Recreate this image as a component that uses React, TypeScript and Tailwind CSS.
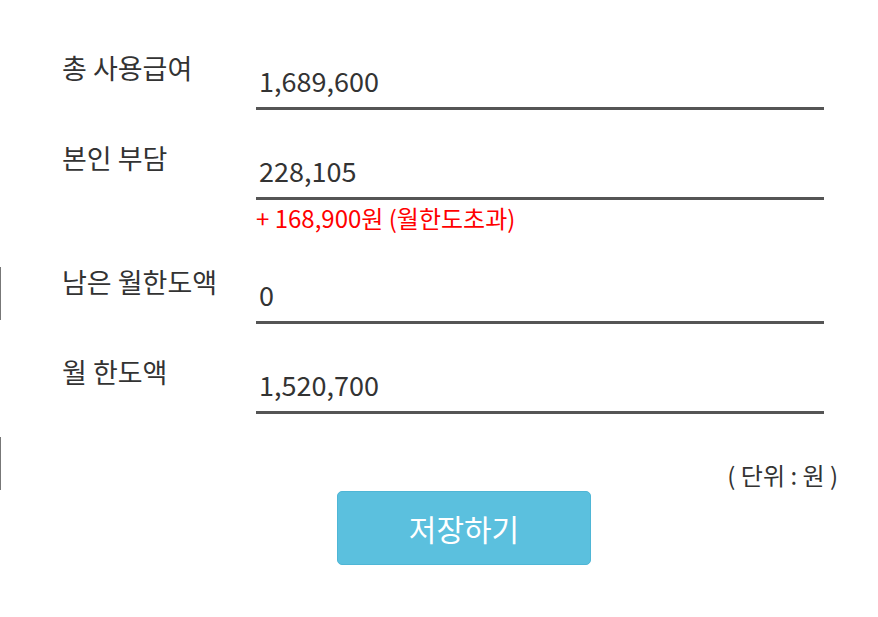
import React from 'react';

type Row = { label: string; value: string; note?: string };

const rows: Row[] = [
  { label: '총 사용급여', value: '1,689,600' },
  { label: '본인 부담', value: '228,105', note: '+ 168,900원 (월한도초과)' },
  { label: '남은 월한도액', value: '0' },
  { label: '월 한도액', value: '1,520,700' },
];

const App: React.FC = () => {
  return (
    <div
      className="relative min-h-[617px] w-[878px] bg-white text-[#333]"
      style={{ fontFamily: '"Noto Sans CJK KR", "Noto Sans", sans-serif' }}
    >
      {/* edges of the panel behind */}
      <div className="absolute left-0 top-[267px] h-[53px] w-px bg-[#777]" />
      <div className="absolute left-0 top-[437px] h-[53px] w-px bg-[#777]" />

      <div className="pl-[62px] pt-[50px]">
        {rows.map((row, i) => (
          <div key={row.label} className={i === 0 ? '' : 'mt-[30px]'}>
            <div className="flex">
              <div className="w-[194px] text-[27px] leading-[36px]">{row.label}</div>
              <div className="flex h-[60px] w-[568px] items-end border-b-[3px] border-[#555] pb-[8px] pl-[3px] text-[27px] leading-[36px]">
                {row.value}
              </div>
            </div>
            {row.note && (
              <div className="ml-[194px] pt-[2px] text-[24px] leading-[32px] text-[#ff0000]">{row.note}</div>
            )}
          </div>
        ))}

        <div className="mt-[46px] w-[776px] text-right text-[24px] leading-[30px]">( 단위 : 원 )</div>

        <div className="mt-[1px] flex w-[804px] justify-center">
          <button className="h-[74px] w-[254px] rounded-[5px] border border-[#4fb6d6] bg-[#5bc0de] text-[30px] text-white">
            저장하기
          </button>
        </div>
      </div>
    </div>
  );
};

export default App;
